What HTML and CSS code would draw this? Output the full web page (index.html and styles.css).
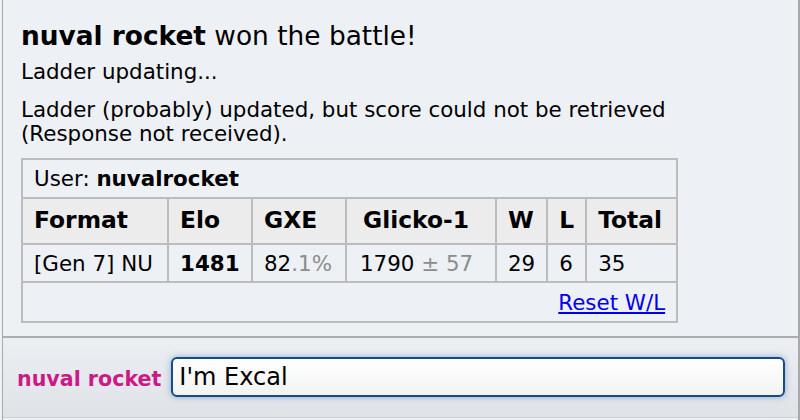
FILE: index.html
```html
<!DOCTYPE html>
<html lang="en">
<head>
	<meta charset="utf-8">
	<title>Battle log</title>
	<link rel="stylesheet" href="styles.css">
</head>
<body>
	<div class="room">
		<div class="log">
			<div class="battle-end"><strong>nuval rocket</strong> won the battle!</div>
			<p class="notice">Ladder updating...</p>
			<p class="notice notice-wide">Ladder (probably) updated, but score could not be retrieved (Response not received).</p>
			<table class="ladder">
				<tr>
					<td class="user-row" colspan="7">User: <strong>nuvalrocket</strong></td>
				</tr>
				<tr class="head">
					<th class="col-format">Format</th>
					<th class="col-elo">Elo</th>
					<th class="col-gxe">GXE</th>
					<th class="col-glicko">Glicko-1</th>
					<th class="col-w">W</th>
					<th class="col-l">L</th>
					<th class="col-total">Total</th>
				</tr>
				<tr class="row">
					<td>[Gen 7] NU</td>
					<td><strong>1481</strong></td>
					<td>82<small>.1%</small></td>
					<td class="glicko">1790<small> &plusmn; 57</small></td>
					<td>29</td>
					<td>6</td>
					<td>35</td>
				</tr>
				<tr>
					<td class="reset" colspan="7"><a href="#">Reset W/L</a></td>
				</tr>
			</table>
		</div>
		<div class="chatbar">
			<span class="username">nuval rocket</span>
			<div class="textbox">I'm Excal</div>
		</div>
	</div>
</body>
</html>
```

FILE: styles.css
```css
html, body{
	margin: 0;
	padding: 0;
}
body{
	background: #edf1f5;
	font-family: "DejaVu Sans", Verdana, sans-serif;
	color: #000;
	overflow: hidden;
}
.room{
	margin-left: 2px;
	height: 420px;
	border-left: 1px solid #a9a9a9;
	border-right: 2px solid #a9a9a9;
	display: flex;
	flex-direction: column;
}

/* log */
.log{
	height: 336px;
	padding: 22px 0 0 18px;
	box-sizing: border-box;
}
.battle-end{
	font-size: 26.4px;
	line-height: 28px;
}
.notice{
	margin: 0;
	font-size: 21.4px;
	line-height: 23.4px;
}
.battle-end + .notice{
	margin-top: 10px;
}
.notice-wide{
	margin-top: 15px;
	width: 680px;
}

/* ladder table */
.ladder{
	margin-top: 13px;
	border-collapse: collapse;
	font-size: 21.4px;
	line-height: 25px;
}
.ladder td, .ladder th{
	border: 2px solid #bcbcbc;
	padding: 6px 11px;
	text-align: left;
	white-space: nowrap;
}
.ladder .user-row{
	padding-top: 6px;
	padding-bottom: 6px;
}
.ladder .head th{
	background: #ececec;
	font-size: 23.4px;
	padding-top: 9px;
	padding-bottom: 10px;
}
.ladder .row td{
	padding-top: 6px;
	padding-bottom: 5px;
}
.ladder small{
	font-size: 100%;
	color: #8c8c8c;
}
.col-format{ width: 122px; }
.col-elo{ width: 60px; }
.col-gxe{ width: 70px; }
.col-glicko{ width: 121px; }
.col-w{ width: 26px; }
.col-l{ width: 12px; }
.col-total{ width: 67px; }
.ladder .col-glicko{
	padding-left: 16px;
}
.ladder .glicko{
	padding-left: 13px;
}
.ladder .reset{
	text-align: right;
	padding-top: 7px;
	padding-bottom: 6px;
}
.reset a{
	color: #0000ee;
}

/* chat bar */
.chatbar{
	flex: 1;
	border-top: 2px solid #adadad;
	border-bottom: 1px solid #cdd0d4;
	margin-bottom: 2px;
	background: linear-gradient(#ebeef2, #dfe2e6);
	display: flex;
	align-items: center;
	padding: 0 13px 0 14px;
	gap: 10px;
}
.username{
	color: #cb1a86;
	font-weight: bold;
	font-size: 20.6px;
	margin-top: 3px;
}
.textbox{
	flex: 1;
	height: 36px;
	margin-top: -1px;
	border: 2px solid #1a4a86;
	border-radius: 6px;
	background: linear-gradient(#fff, #f2f2f2);
	box-shadow: 0 0 6px rgba(60, 120, 200, 0.55);
	font-size: 24px;
	line-height: 36px;
	padding-left: 6px;
}
```
